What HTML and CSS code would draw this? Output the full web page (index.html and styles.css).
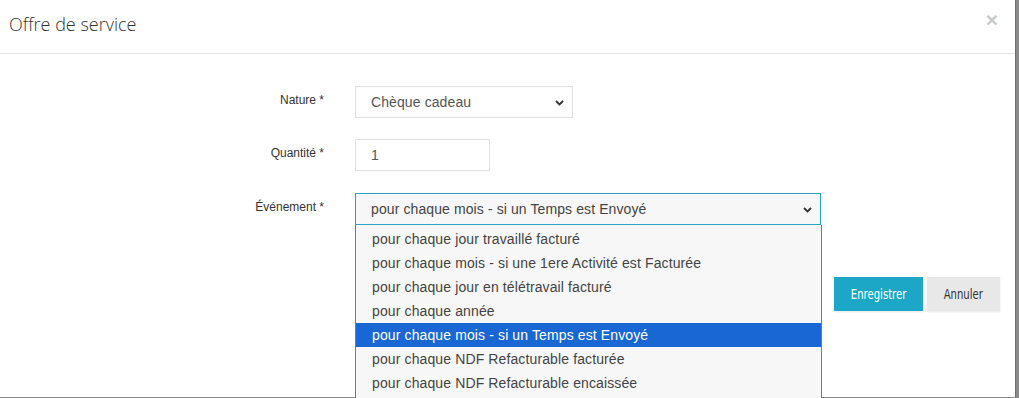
FILE: index.html
```html
<!DOCTYPE html>
<html lang="fr">
<head>
    <meta charset="UTF-8">
    <title>Offre de service</title>
    <link rel="stylesheet" href="styles.css">
</head>
<body>
    <div class="modal">
        <div class="modal-header">
            <h4 class="modal-title">Offre de service</h4>
            <span class="close">&times;</span>
        </div>
        <div class="modal-body">
            <div class="form-row">
                <label>Nature *</label>
                <div class="select nature">
                    <span>Chèque cadeau</span>
                    <svg class="chevron" width="9" height="6" viewBox="0 0 9 6"><path d="M1 1 L4.5 4.5 L8 1" fill="none" stroke="#333" stroke-width="1.8"/></svg>
                </div>
            </div>
            <div class="form-row">
                <label>Quantité *</label>
                <div class="input qty">1</div>
            </div>
            <div class="form-row">
                <label>Événement *</label>
                <div class="select-wrap">
                    <div class="select event open">
                        <span>pour chaque mois - si un Temps est Envoyé</span>
                        <svg class="chevron" width="9" height="6" viewBox="0 0 9 6"><path d="M1 1 L4.5 4.5 L8 1" fill="none" stroke="#333" stroke-width="1.8"/></svg>
                    </div>
                    <ul class="dropdown">
                        <li>pour chaque jour travaillé facturé</li>
                        <li>pour chaque mois - si une 1ere Activité est Facturée</li>
                        <li>pour chaque jour en télétravail facturé</li>
                        <li>pour chaque année</li>
                        <li class="selected">pour chaque mois - si un Temps est Envoyé</li>
                        <li>pour chaque NDF Refacturable facturée</li>
                        <li>pour chaque NDF Refacturable encaissée</li>
                    </ul>
                </div>
            </div>
            <div class="actions">
                <button class="btn btn-primary"><span>Enregistrer</span></button>
                <button class="btn btn-default"><span>Annuler</span></button>
            </div>
        </div>
    </div>
</body>
</html>
```

FILE: styles.css
```css
html, body {
    margin: 0;
    height: 100%;
}
body {
    background-color: #8a8a8a;
    font-family: "Liberation Sans", Arial, sans-serif;
    overflow: hidden;
}
.modal {
    width: 1016px;
    height: 397px;
    background: white;
    border-right: 1px solid #6e6e6e;
    box-sizing: border-box;
}
.modal-header {
    display: flex;
    justify-content: space-between;
    align-items: center;
    height: 53px;
    padding: 0 17px 0 9px;
    border-bottom: 1px solid #e5e5e5;
}
.modal-title {
    margin: 0;
    font-family: "Open Sans", sans-serif;
    font-weight: 300;
    font-size: 18px;
    color: #333;
    margin-top: -6px;
}
.close {
    font-family: "Liberation Sans", Arial, sans-serif;
    font-size: 21px;
    font-weight: bold;
    color: #c9c9c9;
    margin-top: -14px;
}
.modal-body {
    padding: 32px 15px 0 0;
}
.form-row {
    display: flex;
    align-items: center;
    margin-bottom: 21px;
}
.form-row:nth-child(2) {
    margin-bottom: 22px;
}
.form-row label {
    width: 324px;
    margin-right: 31px;
    text-align: right;
    font-size: 12px;
    color: #333;
    margin-top: -4px;
}
.select, .input {
    display: flex;
    align-items: center;
    justify-content: space-between;
    height: 32px;
    box-sizing: border-box;
    padding: 0 8px 0 15px;
    border: 1px solid #e0e0e0;
    font-size: 14px;
    letter-spacing: 0.1px;
    color: #555;
}
.nature {
    width: 218px;
}
.qty {
    width: 135px;
}
.select-wrap {
    position: relative;
}
.event {
    width: 466px;
    background: #f7f7f7;
    border-color: #2ba3c4;
    color: #444;
}
.chevron {
    margin-top: 1px;
}
.dropdown {
    position: absolute;
    top: 32px;
    left: 0;
    width: 467px;
    height: 191px;
    box-sizing: border-box;
    margin: 0;
    padding: 2px 0 0;
    list-style: none;
    background: #f7f7f7;
    border: 1px solid #7a7a7a;
    border-top: none;
}
.dropdown li {
    height: 24px;
    line-height: 24px;
    padding-left: 16px;
    font-size: 14px;
    letter-spacing: 0.12px;
    color: #444;
}
.dropdown li.selected {
    background-color: #1967d2;
    color: white;
}
.actions {
    display: flex;
    justify-content: flex-end;
    gap: 4px;
    margin-top: 52px;
}
.btn {
    height: 34px;
    padding: 0;
    border: none;
    font-family: "DejaVu Sans", sans-serif;
    font-size: 14px;
    box-shadow: 0 1px 2px rgba(0, 0, 0, 0.1);
}
.btn span {
    display: inline-block;
    transform: scaleX(0.72);
}
.btn-primary {
    width: 89px;
    background-color: #1ca7c6;
    color: white;
}
.btn-default {
    width: 73px;
    background-color: #e8e8e8;
    color: #333;
}
```
